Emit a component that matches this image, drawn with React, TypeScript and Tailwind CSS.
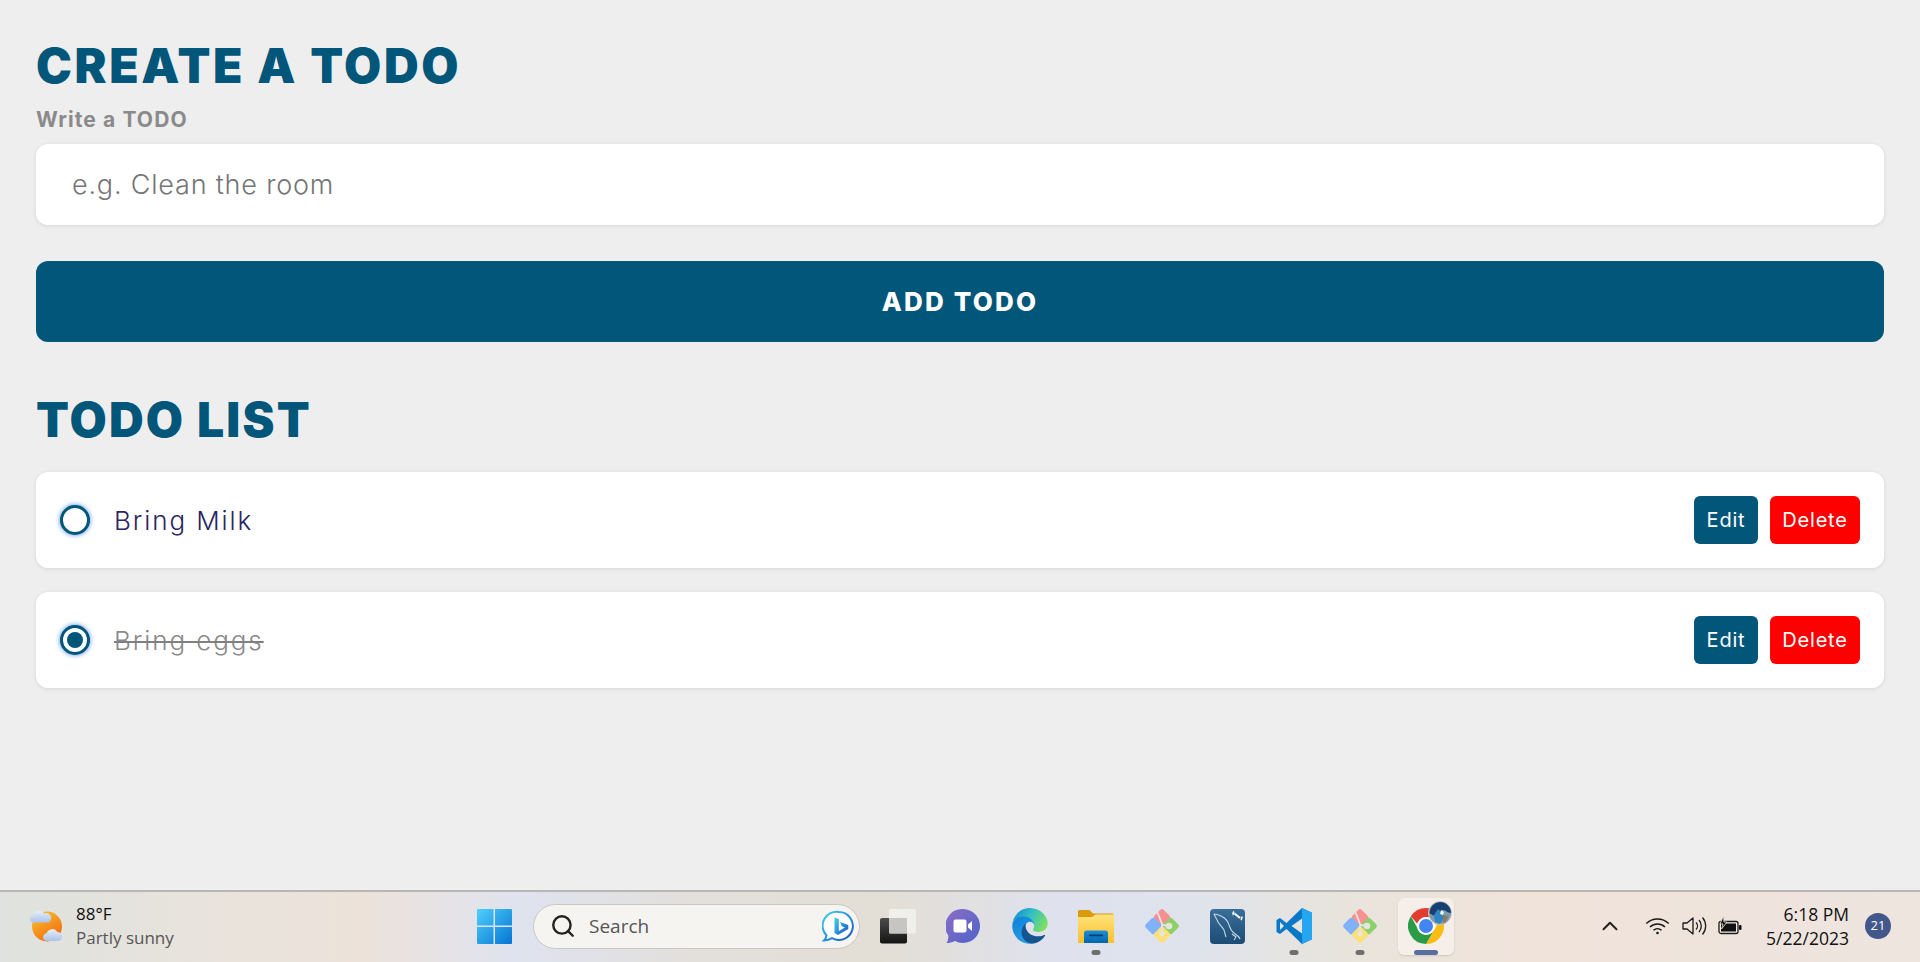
import { ChevronUp, Search } from "lucide-react";

const sans = "font-['Inter','Liberation_Sans',sans-serif]";
const ui = "font-['Open_Sans','Noto_Sans',sans-serif]";

function WeatherIcon() {
  return (
    <svg width="38" height="36" viewBox="0 0 38 36">
      <defs>
        <linearGradient id="sun" x1="0.2" y1="0" x2="0.8" y2="1">
          <stop offset="0" stopColor="#fbc02d" />
          <stop offset="1" stopColor="#f0640f" />
        </linearGradient>
        <linearGradient id="cloud" x1="0" y1="0" x2="0" y2="1">
          <stop offset="0" stopColor="#e8eef8" />
          <stop offset="1" stopColor="#a9c3ea" />
        </linearGradient>
      </defs>
      <circle cx="19" cy="18.5" r="15" fill="url(#sun)" />
      <path d="M5 14.5a4 4 0 0 1 .6-7.8 6 6 0 0 1 10.8-1.2 4.600 4.600 0 0 1 4 9z" fill="url(#cloud)" />
      <path d="M18 33a4 4 0 0 1 .6-7.800 6 6 0 0 1 10.800-1.200 4.500 4.500 0 0 1 4.600 4.500 4.500 4.500 0 0 1-4 4.500z" fill="url(#cloud)" />
    </svg>
  );
}

function WindowsLogo() {
  return (
    <svg width="35" height="35" viewBox="0 0 35 35">
      <defs>
        <linearGradient id="win" x1="0" y1="0" x2="1" y2="1">
          <stop offset="0" stopColor="#4fd0fb" />
          <stop offset="1" stopColor="#0474d4" />
        </linearGradient>
      </defs>
      <path d="M1 0h15.500v16.500H0V1a1 1 0 0 1 1-1zM18 0h16a1 1 0 0 1 1 1v15.500H18zM0 18h16.500v17H1a1 1 0 0 1-1-1zM18 18h17v16a1 1 0 0 1-1 1H18z" fill="url(#win)" />
    </svg>
  );
}

function BingIcon() {
  return (
    <svg width="32" height="32" viewBox="0 0 32 32">
      <defs>
        <linearGradient id="bing" x1="0" y1="0" x2="1" y2="1">
          <stop offset="0" stopColor="#3cd3ee" />
          <stop offset="1" stopColor="#1d4fc4" />
        </linearGradient>
      </defs>
      <path d="M17 2a14 14 0 1 1-7 26.200C8 29.500 5 30.500 2 30.500c1.200-1.200 2.200-3 2.500-5A14 14 0 0 1 17 2z" fill="#fff" stroke="url(#bing)" strokeWidth="2" />
      <path d="M12.500 7.500l4.300 1.500v12l6-3.400-3-1.300-1.700-4.300 8.200 2.900v4.200l-10.200 6-3.600-2.100z" fill="url(#bing)" />
    </svg>
  );
}

function TaskViewIcon() {
  return (
    <svg width="37" height="35" viewBox="0 0 37 35">
      <defs>
        <linearGradient id="tvb" x1="0" y1="0" x2="0" y2="1">
          <stop offset="0" stopColor="#4c4c4c" />
          <stop offset="1" stopColor="#141414" />
        </linearGradient>
      </defs>
      <rect x="0" y="9" width="27" height="25.500" rx="2" fill="url(#tvb)" />
      <rect x="9" y="0" width="27" height="24.500" rx="2" fill="#f3f2f0" fillOpacity="0.8" />
      <rect x="9" y="9" width="18" height="15.500" fill="#c6c5c3" />
    </svg>
  );
}

function MeetIcon() {
  return (
    <svg width="34" height="34" viewBox="0 0 34 34">
      <defs>
        <linearGradient id="meet" x1="0" y1="0" x2="1" y2="1">
          <stop offset="0" stopColor="#8d6cc6" />
          <stop offset="1" stopColor="#4d64c8" />
        </linearGradient>
      </defs>
      <path d="M17 0a17 17 0 1 1-8 32c-3 1.500-6 2-8.500 2 1.200-1.500 2-4 1.800-7.500A17 17 0 0 1 17 0z" fill="url(#meet)" />
      <rect x="7.500" y="10.500" width="13" height="13" rx="2" fill="#fff" />
      <path d="M22 15.500l4-3.500v10l-4-3.500z" fill="#fff" />
    </svg>
  );
}

function EdgeIcon() {
  return (
    <svg width="36" height="36" viewBox="0 0 256 256">
      <defs>
        <linearGradient id="edge-top" x1="0" y1="0.2" x2="1" y2="0.6">
          <stop offset="0" stopColor="#0f8fd6" />
          <stop offset="0.5" stopColor="#34c1c0" />
          <stop offset="1" stopColor="#7de05f" />
        </linearGradient>
        <linearGradient id="edge-mid" x1="0" y1="0" x2="0.6" y2="1">
          <stop offset="0" stopColor="#0c7fd4" />
          <stop offset="1" stopColor="#2a9fe8" />
        </linearGradient>
      </defs>
      <path d="M231.360 190.360c-3.400 1.780-6.910 3.350-10.510 4.690-11.450 4.290-23.580 6.470-35.800 6.450-47.190 0-88.300-32.460-88.300-74.110.07-11.340 6.290-21.740 16.250-27.170-42.690 1.800-53.660 46.280-53.660 72.340 0 73.690 67.910 81.160 82.540 81.160 7.890 0 19.800-2.290 26.950-4.550l1.310-.44c27.480-9.500 50.760-28.070 66.010-52.660 1.140-1.870-.86-4.080-2.790-3.710z" fill="#14548f" />
      <path d="M105.730 241.420c-8.890-5.520-16.600-12.740-22.670-21.260-25.930-35.520-18.130-85.330 17.390-111.250 3.710-2.700 7.610-5.130 11.680-7.270 3.050-1.440 8.270-4.040 15.210-3.920 9.880.07 19.150 4.770 25.050 12.700 3.950 5.270 6.130 11.650 6.220 18.240 0-.21 23.940-77.890-78.300-77.890-42.970 0-78.300 40.780-78.300 76.560-.17 18.930 3.880 37.660 11.860 54.830 27.010 57.630 92.890 85.900 153.270 65.770-20.690 6.520-43.190 3.710-61.590-7.700z" fill="url(#edge-mid)" />
      <path d="M152.310 148.860c-.79 1.030-3.240 2.460-3.240 5.560 0 2.560 1.670 5.030 4.630 7.100 14.110 9.810 40.710 8.510 40.780 8.510 10.450-.02 20.710-2.850 29.690-8.180 18.320-10.700 29.580-30.310 29.830-51.530.26-21.980-7.850-36.600-11.130-43.070C222.060 27.060 176.940 0 127.930 0 58.920 0 2.780 55.420 1.800 124.420c.47-35.780 36.030-64.680 78.300-64.680 3.430 0 22.960.33 41.110 9.850 15.990 8.390 24.370 18.530 30.200 28.560 6.050 10.430 7.130 23.600 7.130 28.850 0 5.250-2.680 13.030-6.230 21.860z" fill="url(#edge-top)" />
    </svg>
  );
}

function FolderIcon() {
  return (
    <svg width="36" height="33" viewBox="0 0 36 33">
      <defs>
        <linearGradient id="fold" x1="0" y1="0" x2="0" y2="1">
          <stop offset="0" stopColor="#ffe27a" />
          <stop offset="1" stopColor="#fbc02d" />
        </linearGradient>
        <linearGradient id="foldb" x1="0" y1="0" x2="0" y2="1">
          <stop offset="0" stopColor="#1c8ed8" />
          <stop offset="1" stopColor="#0565ab" />
        </linearGradient>
      </defs>
      <path d="M0 1.500A1.500 1.500 0 0 1 1.500 0h10l3.500 3.500H34A2 2 0 0 1 36 5.500V8H0z" fill="#d99a0b" />
      <path d="M0 7h14l3.500-2.500H36V33H0z" fill="url(#fold)" />
      <path d="M6 33V23a2.500 2.500 0 0 1 2.500-2.500h19A2.500 2.500 0 0 1 30 23v10z" fill="url(#foldb)" />
      <rect x="11" y="24.500" width="14" height="1.800" fill="#0b3f6e" />
    </svg>
  );
}

function DiamondIcon() {
  return (
    <svg width="36" height="36" viewBox="0 0 36 36">
      <rect x="11.500" y="2.800" width="13" height="13" rx="2.500" transform="rotate(45 18 9.300)" fill="#f79191" />
      <rect x="2.800" y="11.500" width="13" height="13" rx="2.500" transform="rotate(45 9.300 18)" fill="#7fb2fb" />
      <rect x="20.200" y="11.500" width="13" height="13" rx="2.500" transform="rotate(45 26.700 18)" fill="#8dd068" />
      <rect x="11.500" y="20.200" width="13" height="13" rx="2.500" transform="rotate(45 18 26.700)" fill="#fde07a" />
      <path d="M13.500 4.500l5 12.500 6 1" fill="none" stroke="#e6e5e2" strokeWidth="1.800" />
      <circle cx="25" cy="18" r="3.300" fill="#e6e5e2" />
      <path d="M18 17v7" stroke="#e6e5e2" strokeWidth="1.800" />
      <circle cx="18" cy="25.500" r="2.600" fill="#e6e5e2" />
    </svg>
  );
}

function WorkbenchIcon() {
  return (
    <svg width="35" height="35" viewBox="0 0 35 35">
      <defs>
        <linearGradient id="wb" x1="0" y1="0" x2="0" y2="1">
          <stop offset="0" stopColor="#3a6f9a" />
          <stop offset="1" stopColor="#1b4c74" />
        </linearGradient>
      </defs>
      <rect width="35" height="35" rx="4" fill="url(#wb)" />
      <path d="M4 5c3 0 5 1 7 2 4 2 7 5 8 9 1 3 2 6 5 8 2 2 5 3 6 6M4 5c1 3 3 5 4 8 1 2 4 5 6 8 1 3 1 4 2 7M22 25l4 3-2 3" fill="none" stroke="#d6e2ec" strokeWidth="1.100" strokeOpacity="0.900" />
      <path d="M24.500 4.500l5.500 4.500" fill="none" stroke="#eef3f7" strokeWidth="2.200" />
      <path d="M24 2.500a3 3 0 0 0-.5 3.500M31 11a3 3 0 0 0 .5-3.500" fill="none" stroke="#eef3f7" strokeWidth="1.800" />
    </svg>
  );
}

function VsCodeIcon() {
  return (
    <svg width="36" height="36" viewBox="0 0 36 36">
      <path fillRule="evenodd" d="M26 0l10 4.800v26.400L26 36 10.500 21 4 26l-3.500-2V12L4 10l6.500 5zM26 10.500L15.500 18 26 25.500zM4 14v8l4-4z" fill="#0a78c8" />
      <path d="M26 0l10 4.800v26.400L26 36z" fill="#24a7f0" />
    </svg>
  );
}

function ChromeIcon() {
  return (
    <svg width="36" height="36" viewBox="0 0 36 36">
      <path d="M18 0a18 18 0 0 1 15.600 9H18a9 9 0 0 0-8.700 6.800L2.900 8.300A18 18 0 0 1 18 0z" fill="#e33b2e" />
      <path d="M33.600 9A18 18 0 0 1 18 36l7.800-13.500A9 9 0 0 0 25.800 9z" fill="#fbbc12" />
      <path d="M18 36A18 18 0 0 1 2.900 8.300l7.800 14.200a9 9 0 0 0 15.100 0L18 36z" fill="#2a9c47" />
      <circle cx="18" cy="18" r="9" fill="#fff" />
      <circle cx="18" cy="18" r="7" fill="#4285f0" />
    </svg>
  );
}

function AvatarIcon() {
  return (
    <svg width="24" height="24" viewBox="0 0 24 24" className="absolute right-0.5 top-[3px]">
      <circle cx="12" cy="12" r="11.500" fill="#7f98ab" stroke="#c9c9c6" />
      <path d="M12 1a11 11 0 0 1 11 11c-4 0-5-3-8-3-2 0-3 4-5 6-2 1-6-1-8.500-3A11 11 0 0 1 12 1z" fill="#16406f" />
      <path d="M6 14l4-6 3 3 3 6-4 6-5-2z" fill="#2d85c4" />
      <path d="M13 9l3 2-1 3-3-1z" fill="#f2f2ef" />
      <path d="M15 14l5 1-2 6-3 1z" fill="#8a7a64" />
    </svg>
  );
}

function WifiIcon() {
  return (
    <svg width="25" height="18" viewBox="0 0 24 18" fill="none" stroke="#1a1a1a" strokeWidth="1.500">
      <path d="M.8 6.500a16 16 0 0 1 22.400 0" />
      <path d="M4.500 10a11 11 0 0 1 15 0" />
      <path d="M8 13.300a6 6 0 0 1 8 0" />
      <circle cx="12" cy="16" r="1.300" fill="#1a1a1a" stroke="none" />
    </svg>
  );
}

function SpeakerIcon() {
  return (
    <svg width="25" height="20" viewBox="0 0 25 20" fill="none" stroke="#1a1a1a" strokeWidth="1.300">
      <path d="M1 7h4l6-5v16l-6-5H1z" strokeLinejoin="round" />
      <path d="M14 6.500a5 5 0 0 1 0 7" />
      <path d="M17 4a9 9 0 0 1 0 12" />
      <path d="M20.500 1.500a13 13 0 0 1 0 17" />
    </svg>
  );
}

function BatteryIcon() {
  return (
    <svg width="24" height="20" viewBox="0 0 24 20">
      <rect x="1" y="5.500" width="19" height="12" rx="2" fill="#fff" fillOpacity="0.300" stroke="#1a1a1a" strokeWidth="1.300" />
      <rect x="3" y="7.500" width="15" height="8" fill="#111" />
      <rect x="21" y="9" width="2.500" height="5" rx="1" fill="#111" />
      <path d="M5.500 0L2 8h3l-1.500 5L9 6H6z" fill="#111" stroke="#efe4dc" strokeWidth="0.800" />
    </svg>
  );
}

function RunDot({ active }: { active?: boolean }) {
  return active ? (
    <span className="absolute bottom-0 left-1/2 h-[5px] w-6 -translate-x-1/2 rounded-full bg-[#5a6f9d]" />
  ) : (
    <span className="absolute bottom-0 left-1/2 h-[5px] w-[9px] -translate-x-1/2 rounded-full bg-[#6f6f6f]" />
  );
}

function TodoRow({ text, done }: { text: string; done?: boolean }) {
  return (
    <li className="flex h-24 items-center justify-between rounded-xl bg-white px-6 shadow-[0_1px_4px_rgba(0,0,0,0.1)]">
      <div className="flex items-center gap-6">
        <span className="flex h-[30px] w-[30px] items-center justify-center rounded-full border-[3px] border-[#01567a] bg-white shadow-[0_0_5px_rgba(30,110,220,0.8)]">
          {done && <span className="h-4 w-4 rounded-full bg-[#01567a]" />}
        </span>
        <span
          className={
            done
              ? "text-[26px] font-light tracking-[1.9px] text-[#8a8a8a] line-through decoration-[#808080] decoration-2"
              : "text-[26px] font-light tracking-[1.9px] text-[#2a2560]"
          }
        >
          {text}
        </span>
      </div>
      <div className="flex gap-3">
        <button className="h-12 w-16 rounded-md bg-[#01567a] text-[20px] font-normal tracking-[0.8px] text-white">Edit</button>
        <button className="h-12 w-[90px] rounded-md bg-[#ff0000] text-[20px] font-normal tracking-[0.8px] text-white">Delete</button>
      </div>
    </li>
  );
}

export default function App() {
  return (
    <div className={`flex h-[962px] flex-col overflow-hidden bg-[#eeeeee] ${sans}`}>
      <main className="flex-1 px-9 pt-[37px]">
        <h1 className="text-[48px] font-black leading-[58px] tracking-[2.6px] text-[#01567a]">CREATE A TODO</h1>
        <label className="mt-[13px] block text-[21px] font-bold leading-6 tracking-[1.1px] text-[#8a8a8a]">Write a TODO</label>
        <input
          placeholder="e.g. Clean the room"
          className="mt-3 block h-[81px] w-full rounded-xl bg-white px-9 text-[27px] font-light tracking-[0.8px] shadow-[0_1px_4px_rgba(0,0,0,0.1)] outline-none placeholder:text-[#757575]"
        />
        <button className="mt-9 block h-[81px] w-full rounded-xl bg-[#01567a] text-[26px] font-extrabold tracking-[2.2px] text-white">ADD TODO</button>

        <h2 className="mt-[49px] text-[48px] font-black leading-[58px] tracking-[2.2px] text-[#01567a]">TODO LIST</h2>
        <ul className="mt-[23px] flex flex-col gap-6">
          <TodoRow text="Bring Milk" />
          <TodoRow text="Bring eggs" done />
        </ul>
      </main>

      <footer className={`relative flex h-[72px] shrink-0 items-center border-t-2 border-[#b9b7b4] bg-[linear-gradient(90deg,#dfe2de_0%,#e9e3dc_12%,#ece2da_19%,#dfe3ef_27%,#e3e0dc_36%,#e3ded5_46%,#dfe2ee_55%,#dfe3ec_62%,#e8e4dc_70%,#f0e3da_80%,#eee5df_100%)] pb-0.5 ${ui}`}>
        <div className="ml-[28px] flex w-[449px] items-center gap-2.5">
          <WeatherIcon />
          <div className="flex flex-col">
            <span className="text-[17px] leading-[24px] text-[#111]">88°F</span>
            <span className="text-[17px] leading-[24px] text-[#555]">Partly sunny</span>
          </div>
        </div>

        <WindowsLogo />

        <div className="ml-[21px] flex h-[45px] w-[327px] items-center rounded-full border border-[#c9c7c4] bg-[#f6f4f1] pl-4 pr-[5px]">
          <Search size={26} strokeWidth={2.2} className="text-[#222]" />
          <span className="ml-[13px] text-[19px] text-[#555]">Search</span>
          <span className="ml-auto">
            <BingIcon />
          </span>
        </div>

        <div className="ml-5 flex h-[57px] items-center">
          <TaskViewIcon />
          <div className="ml-[29px]"><MeetIcon /></div>
          <div className="ml-8"><EdgeIcon /></div>
          <div className="relative ml-[30px] flex h-[57px] items-center">
            <FolderIcon />
            <RunDot />
          </div>
          <div className="ml-[30px]"><DiamondIcon /></div>
          <div className="ml-[30px]"><WorkbenchIcon /></div>
          <div className="relative ml-[31px] flex h-[57px] items-center">
            <VsCodeIcon />
            <RunDot />
          </div>
          <div className="relative ml-[30px] flex h-[57px] items-center">
            <DiamondIcon />
            <RunDot />
          </div>
          <div className="relative ml-5 flex h-[57px] w-14 items-center justify-center rounded-md bg-[#f6efe9] shadow-[0_1px_2px_rgba(0,0,0,0.12)]">
            <ChromeIcon />
            <AvatarIcon />
            <RunDot active />
          </div>
        </div>

        <ChevronUp size={26} strokeWidth={1.8} className="ml-[143px] text-[#222]" />
        <div className="ml-[22px]"><WifiIcon /></div>
        <div className="ml-3"><SpeakerIcon /></div>
        <div className="ml-[11px]"><BatteryIcon /></div>

        <div className="ml-auto mr-4 flex flex-col items-end">
          <span className="text-[17.5px] leading-6 text-[#111]">6:18 PM</span>
          <span className="text-[17.5px] leading-6 text-[#111]">5/22/2023</span>
        </div>
        <span className="mr-[29px] flex h-[26px] w-[26px] items-center justify-center rounded-full bg-[#42588a] text-[13px] text-white">21</span>
      </footer>
    </div>
  );
}
